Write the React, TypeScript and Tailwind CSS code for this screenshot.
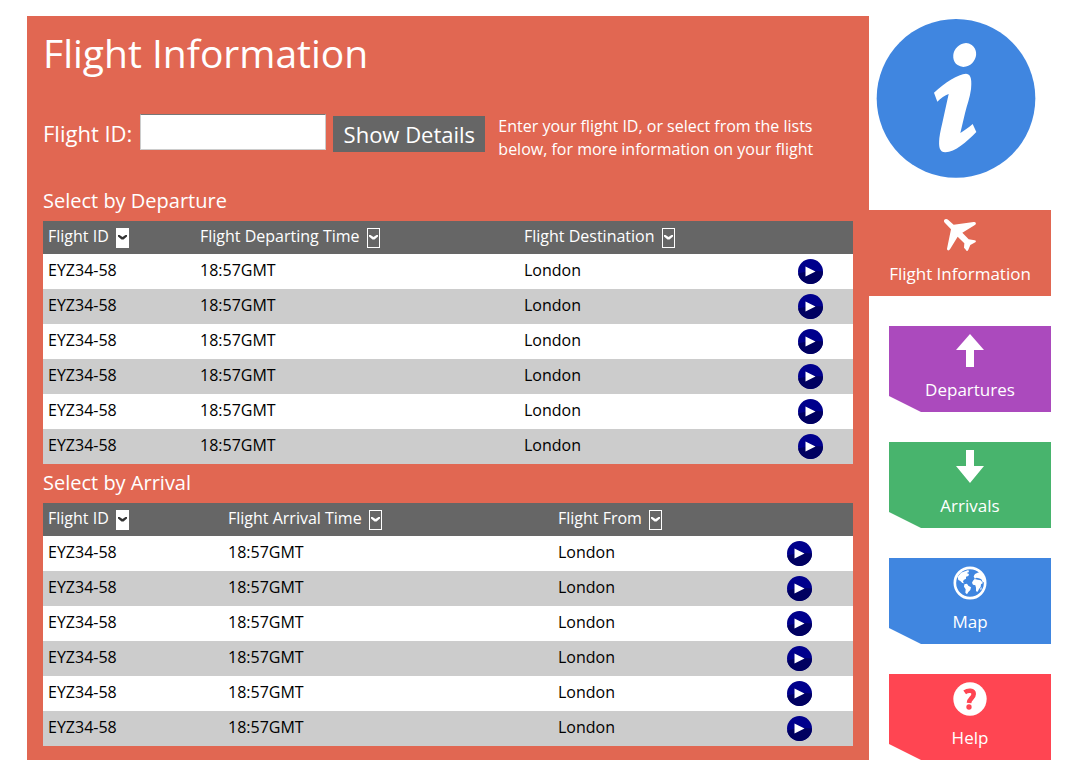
import React from "react";

type Row = { id: string; time: string; place: string };

const flights: Row[] = Array.from({ length: 6 }, () => ({
  id: "EYZ34-58",
  time: "18:57GMT",
  place: "London",
}));

function InfoIcon() {
  return (
    <svg viewBox="33 24 480 480" className="ml-[7px] mt-0.5 size-40" role="img" aria-label="Information">
      <circle cx="273" cy="265" r="238" fill="#4086e0" />
      <ellipse cx="299" cy="135" rx="33" ry="37" transform="rotate(35 299 135)" fill="#fff" />
      <path
        fill="#fff"
        d="M207 248C240 217 280 192 303 191C321 191 320 218 318 238C315 262 306 285 300 310L286 369C298 362 312 352 323 342L334 366C305 396 270 426 241 427C222 427 221 408 223 385C225 365 231 345 236 320L251 252C240 255 227 266 217 275Z"
      />
    </svg>
  );
}

function PlaneIcon() {
  return (
    <svg viewBox="0 0 102 102" className="size-[34px]" fill="currentColor" aria-hidden="true">
      <path d="M4 5C8 1 13 3 16 6L32 20L92 12C98 11 101 16 97 20L58 44L77 64L95 67C99 67 100 71 97 73L82 81L76 95C74 100 70 100 69 96L63 89L64 76L44 56L21 94C18 99 12 98 12 92L24 34L6 15C3 12 2 8 4 5Z" />
    </svg>
  );
}

function ArrowIcon({ down = false }: { down?: boolean }) {
  return (
    <svg viewBox="0 0 34 34" className="size-[34px]" fill="currentColor" aria-hidden="true">
      <path d={down ? "M13 0H21V16H31L17 33L3 16H13Z" : "M17 0L31 16H21V33H13V16H3Z"} />
    </svg>
  );
}

function GlobeIcon() {
  return (
    <svg viewBox="219 49 102 102" className="size-[34px]" fill="currentColor" aria-hidden="true">
      <circle cx="270" cy="100" r="45.5" fill="none" stroke="currentColor" strokeWidth="8" />
      <path d="M233 82L243 69L257 64L265 61L267 67L260 70L267 73L265 79L258 81L258 87L251 91L249 97L253 101L247 100L240 93L235 91Z" />
      <path d="M253 104L261 102L265 108L273 113L271 121L265 127L261 134L256 129L257 119L252 111Z" />
      <path d="M279 93L284 88L293 90L302 92L309 100L303 104L302 112L297 118L293 126L288 125L288 114L286 107L279 105L276 99Z" />
      <path d="M281 80L285 73L293 69L301 67L309 74L315 86L314 98L308 97L304 89L297 86L290 84L284 87Z" />
      <path d="M302 116L305 112L304 120L301 122Z" />
    </svg>
  );
}

function HelpIcon() {
  return (
    <svg viewBox="219 42 102 102" className="size-[34px]" aria-hidden="true">
      <circle cx="270" cy="93" r="50" fill="currentColor" />
      <path d="M254 73C264 66 281 66 281 78C281 90 268 91 267 105" fill="none" stroke="#ff4552" strokeWidth="14" />
      <circle cx="267" cy="117" r="8" fill="#ff4552" />
    </svg>
  );
}

function PlayIcon() {
  return (
    <svg viewBox="0 0 25 25" className="block size-[25px]" aria-hidden="true">
      <circle cx="12.5" cy="12.5" r="12.5" fill="#00008c" />
      <path d="M0.160 14.500Q12.500 11 25 12.500A12.500 12.500 0 0 1 0.160 14.500Z" fill="#000060" />
      <path d="M7.500 7.500L17.500 12.500L7.500 17.500Z" fill="#fff" />
    </svg>
  );
}

function HeaderCell({ label, active = false }: { label: string; active?: boolean }) {
  return (
    <th scope="col" className="p-0 px-[5px] text-left font-normal">
      <div className="flex items-center gap-[7px] whitespace-nowrap">
        <span className="pb-[3px]">{label}</span>
        <button
          type="button"
          aria-label={`Sort by ${label}`}
          className={
            active
              ? "flex h-5 w-[13px] items-center justify-center border border-white bg-white text-[#333]"
              : "flex h-5 w-[13px] items-center justify-center border border-white text-white"
          }
        >
          <svg viewBox="0 0 9 5" className="h-[5px] w-[9px] shrink-0" fill="currentColor" aria-hidden="true">
            <path d="M0 0L1.500 0L4.500 2L7.500 0L9 0V1.500L5.500 4.500H3.500L0 1.500Z" />
          </svg>
        </button>
      </div>
    </th>
  );
}

type TableProps = { title: string; heads: string[]; cols: string[]; rows: Row[]; className: string };

function FlightTable({ title, heads, cols, rows, className }: TableProps) {
  return (
    <section className={className}>
      <h2 className="mb-1.5 text-[20px] leading-7">{title}</h2>
      <table className="w-full table-fixed border-collapse text-base leading-6">
        <colgroup>
          {cols.map((c, i) => (
            <col key={i} className={c} />
          ))}
        </colgroup>
        <thead>
          <tr className="h-[33px] bg-[#666]">
            {heads.map((h, i) => (
              <HeaderCell key={h} label={h} active={i === 0} />
            ))}
            <td />
          </tr>
        </thead>
        <tbody className="text-black">
          {rows.map((r, i) => (
            <tr key={i} className="h-[35px] bg-white even:bg-[#ccc]">
              <td className="px-[5px] pb-[3px]">{r.id}</td>
              <td className="px-[5px] pb-[3px]">{r.time}</td>
              <td className="px-[5px] pb-[3px]">{r.place}</td>
              <td className="px-[5px]">
                <button type="button" aria-label={`Show flight ${r.id}`} className="block">
                  <PlayIcon />
                </button>
              </td>
            </tr>
          ))}
        </tbody>
      </table>
    </section>
  );
}

function NavItem({ label, color, icon, active = false }: { label: string; color: string; icon: React.ReactNode; active?: boolean }) {
  const shape = active ? "" : "ml-5 [clip-path:polygon(0_0,100%_0,100%_100%,32px_100%,0_70px)]";
  return (
    <a
      href="#"
      aria-current={active ? "page" : undefined}
      className={`flex flex-col items-center pt-2 pb-2.5 text-[17px] leading-6 text-white ${shape} ${color}`}
    >
      {icon}
      <span className="mt-2.5">{label}</span>
    </a>
  );
}

export default function App() {
  return (
    <div className="flex items-stretch bg-white px-[27px] pt-4 pb-[19px] font-['Open_Sans','Noto_Sans',sans-serif]">
      <main className="min-w-0 flex-1 bg-[#e16752] px-4 pt-[13px] pb-[14px] text-white">
        <h1 className="text-[39px] leading-[48px]">Flight Information</h1>
        <form className="mt-[37px] flex items-start" onSubmit={(e) => e.preventDefault()}>
          <label htmlFor="flight-id" className="pt-1 text-[22px] leading-[30px] whitespace-nowrap">
            Flight ID:
          </label>
          <input
            id="flight-id"
            type="text"
            className="ml-2 h-9 w-[186px] border border-[#ccc] border-t-[#777] bg-white px-2 text-[22px] text-black"
          />
          <button type="submit" className="mt-0.5 ml-[7px] h-9 w-[152px] bg-[#666] text-[22px] leading-9 whitespace-nowrap">
            Show Details
          </button>
          <p className="ml-[13px] max-w-[340px] pt-px text-base leading-[23px]">
            Enter your flight ID, or select from the lists
            <br />
            below, for more information on your flight
          </p>
        </form>
        <FlightTable
          className="mt-[26px]"
          title="Select by Departure"
          heads={["Flight ID", "Flight Departing Time", "Flight Destination"]}
          cols={["w-[152px]", "w-[324px]", "w-auto", "w-[60px]"]}
          rows={flights}
        />
        <FlightTable
          className="mt-[5px]"
          title="Select by Arrival"
          heads={["Flight ID", "Flight Arrival Time", "Flight From"]}
          cols={["w-[180px]", "w-[330px]", "w-auto", "w-[71px]"]}
          rows={flights}
        />
      </main>
      <aside className="flex w-[182px] shrink-0 flex-col justify-between">
        <InfoIcon />
        <nav className="flex flex-col gap-[30px]" aria-label="Sections">
          <NavItem active label="Flight Information" color="bg-[#e16752]" icon={<PlaneIcon />} />
          <NavItem label="Departures" color="bg-[#ab4abd]" icon={<ArrowIcon />} />
          <NavItem label="Arrivals" color="bg-[#48b46d]" icon={<ArrowIcon down />} />
          <NavItem label="Map" color="bg-[#4086e0]" icon={<GlobeIcon />} />
          <NavItem label="Help" color="bg-[#ff4552]" icon={<HelpIcon />} />
        </nav>
      </aside>
    </div>
  );
}
